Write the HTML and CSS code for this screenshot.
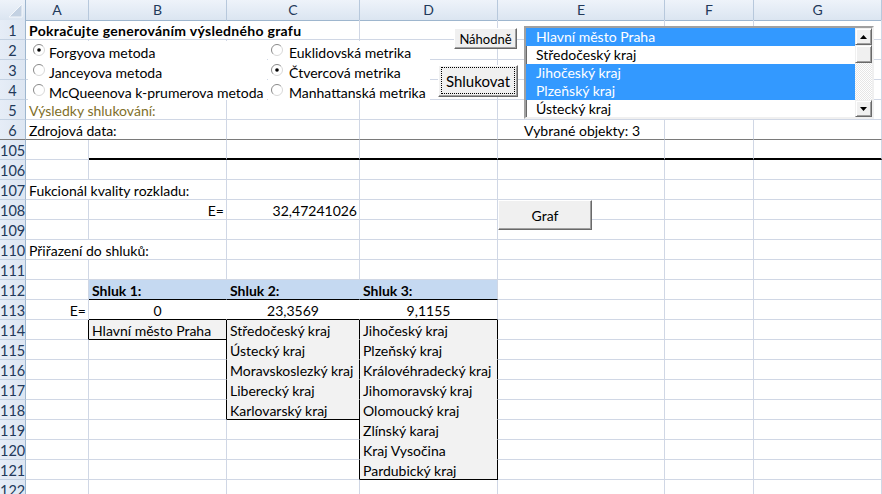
FILE: index.html
```html
<!DOCTYPE html>
<html lang="cs">
<head>
<meta charset="utf-8">
<title>Shlukování</title>
<link rel="stylesheet" href="styles.css">
</head>
<body>
<div class="sheet">
  <div class="row hd">
    <div class="c corner"><svg width="26" height="20" viewBox="0 0 26 20"><polygon points="22,4 22,17 9,17" fill="#c3d1e2" stroke="#f4f7fb" stroke-width="1"/></svg></div>
    <div class="c">A</div><div class="c">B</div><div class="c">C</div><div class="c">D</div><div class="c">E</div><div class="c">F</div><div class="c">G</div>
  </div>
  <div class="row"><div class="c rh">1</div><div class="c span3 b title">Pokračujte generováním výsledného grafu</div><div class="c"></div><div class="c"></div><div class="c"></div><div class="c"></div></div>
  <div class="row"><div class="c rh">2</div><div class="c"></div><div class="c"></div><div class="c"></div><div class="c"></div><div class="c"></div><div class="c"></div><div class="c"></div></div>
  <div class="row"><div class="c rh">3</div><div class="c"></div><div class="c"></div><div class="c"></div><div class="c"></div><div class="c"></div><div class="c"></div><div class="c"></div></div>
  <div class="row"><div class="c rh">4</div><div class="c"></div><div class="c"></div><div class="c"></div><div class="c"></div><div class="c"></div><div class="c"></div><div class="c"></div></div>
  <div class="row"><div class="c rh">5</div><div class="c span2 olive">Výsledky shlukování:</div><div class="c"></div><div class="c"></div><div class="c"></div><div class="c"></div><div class="c"></div></div>
  <div class="row frozen"><div class="c rh">6</div><div class="c span2">Zdrojová data:</div><div class="c"></div><div class="c"></div><div class="c lbl">Vybrané objekty: 3</div><div class="c"></div><div class="c"></div></div>
  <div class="row"><div class="c rh">105</div><div class="c"></div><div class="c thick"></div><div class="c thick"></div><div class="c thick"></div><div class="c thick"></div><div class="c thick"></div><div class="c thick"></div></div>
  <div class="row"><div class="c rh">106</div><div class="c"></div><div class="c"></div><div class="c"></div><div class="c"></div><div class="c"></div><div class="c"></div><div class="c"></div></div>
  <div class="row"><div class="c rh">107</div><div class="c span2">Fukcionál kvality rozkladu:</div><div class="c"></div><div class="c"></div><div class="c"></div><div class="c"></div><div class="c"></div></div>
  <div class="row"><div class="c rh">108</div><div class="c"></div><div class="c r">E=</div><div class="c r">32,47241026</div><div class="c"></div><div class="c"></div><div class="c"></div><div class="c"></div></div>
  <div class="row"><div class="c rh">109</div><div class="c"></div><div class="c"></div><div class="c"></div><div class="c"></div><div class="c"></div><div class="c"></div><div class="c"></div></div>
  <div class="row"><div class="c rh">110</div><div class="c span2">Přiřazení do shluků:</div><div class="c"></div><div class="c"></div><div class="c"></div><div class="c"></div><div class="c"></div></div>
  <div class="row"><div class="c rh">111</div><div class="c"></div><div class="c"></div><div class="c"></div><div class="c"></div><div class="c"></div><div class="c"></div><div class="c"></div></div>
  <div class="row"><div class="c rh">112</div><div class="c"></div><div class="c blu nr bb b">Shluk 1:</div><div class="c blu nr bb b">Shluk 2:</div><div class="c blu bb b">Shluk 3:</div><div class="c"></div><div class="c"></div><div class="c"></div></div>
  <div class="row"><div class="c rh">113</div><div class="c r">E=</div><div class="c ctr nr bb">0</div><div class="c ctr nr bb">23,3569</div><div class="c ctr bb">9,1155</div><div class="c"></div><div class="c"></div><div class="c"></div></div>
  <div class="row"><div class="c rh">114</div><div class="c br"></div><div class="c g br bb">Hlavní město Praha</div><div class="c g br">Středočeský kraj</div><div class="c g br">Jihočeský kraj</div><div class="c"></div><div class="c"></div><div class="c"></div></div>
  <div class="row"><div class="c rh">115</div><div class="c"></div><div class="c br"></div><div class="c g br">Ústecký kraj</div><div class="c g br">Plzeňský kraj</div><div class="c"></div><div class="c"></div><div class="c"></div></div>
  <div class="row"><div class="c rh">116</div><div class="c"></div><div class="c br"></div><div class="c g br">Moravskoslezký kraj</div><div class="c g br">Královéhradecký kraj</div><div class="c"></div><div class="c"></div><div class="c"></div></div>
  <div class="row"><div class="c rh">117</div><div class="c"></div><div class="c br"></div><div class="c g br">Liberecký kraj</div><div class="c g br">Jihomoravský kraj</div><div class="c"></div><div class="c"></div><div class="c"></div></div>
  <div class="row"><div class="c rh">118</div><div class="c"></div><div class="c br"></div><div class="c g br bb">Karlovarský kraj</div><div class="c g br">Olomoucký kraj</div><div class="c"></div><div class="c"></div><div class="c"></div></div>
  <div class="row"><div class="c rh">119</div><div class="c"></div><div class="c"></div><div class="c br"></div><div class="c g br">Zlínský karaj</div><div class="c"></div><div class="c"></div><div class="c"></div></div>
  <div class="row"><div class="c rh">120</div><div class="c"></div><div class="c"></div><div class="c br"></div><div class="c g br">Kraj Vysočina</div><div class="c"></div><div class="c"></div><div class="c"></div></div>
  <div class="row"><div class="c rh">121</div><div class="c"></div><div class="c"></div><div class="c br"></div><div class="c g br bb">Pardubický kraj</div><div class="c"></div><div class="c"></div><div class="c"></div></div>
  <div class="row"><div class="c rh">122</div><div class="c"></div><div class="c"></div><div class="c"></div><div class="c"></div><div class="c"></div><div class="c"></div><div class="c"></div></div>

  <div class="optbox opt1">
    <div class="opt"><svg class="radio" width="12" height="12" viewBox="0 0 12 12"><circle cx="6" cy="6" r="5.5" fill="#fff"/><path d="M2.1 9.9 A5.5 5.5 0 0 1 9.9 2.1" fill="none" stroke="#8a8a8a"/><path d="M9.9 2.1 A5.5 5.5 0 0 1 2.1 9.9" fill="none" stroke="#d8d8d8"/><circle cx="6" cy="6" r="1.8" fill="#000"/></svg><span>Forgyova metoda</span></div>
    <div class="opt"><svg class="radio" width="12" height="12" viewBox="0 0 12 12"><circle cx="6" cy="6" r="5.5" fill="#fff"/><path d="M2.1 9.9 A5.5 5.5 0 0 1 9.9 2.1" fill="none" stroke="#8a8a8a"/><path d="M9.9 2.1 A5.5 5.5 0 0 1 2.1 9.9" fill="none" stroke="#d8d8d8"/></svg><span>Janceyova metoda</span></div>
    <div class="opt"><svg class="radio" width="12" height="12" viewBox="0 0 12 12"><circle cx="6" cy="6" r="5.5" fill="#fff"/><path d="M2.1 9.9 A5.5 5.5 0 0 1 9.9 2.1" fill="none" stroke="#8a8a8a"/><path d="M9.9 2.1 A5.5 5.5 0 0 1 2.1 9.9" fill="none" stroke="#d8d8d8"/></svg><span>McQueenova k-prumerova metoda</span></div>
  </div>
  <div class="optbox opt2">
    <div class="opt"><svg class="radio" width="12" height="12" viewBox="0 0 12 12"><circle cx="6" cy="6" r="5.5" fill="#fff"/><path d="M2.1 9.9 A5.5 5.5 0 0 1 9.9 2.1" fill="none" stroke="#8a8a8a"/><path d="M9.9 2.1 A5.5 5.5 0 0 1 2.1 9.9" fill="none" stroke="#d8d8d8"/></svg><span>Euklidovská metrika</span></div>
    <div class="opt"><svg class="radio" width="12" height="12" viewBox="0 0 12 12"><circle cx="6" cy="6" r="5.5" fill="#fff"/><path d="M2.1 9.9 A5.5 5.5 0 0 1 9.9 2.1" fill="none" stroke="#8a8a8a"/><path d="M9.9 2.1 A5.5 5.5 0 0 1 2.1 9.9" fill="none" stroke="#d8d8d8"/><circle cx="6" cy="6" r="1.8" fill="#000"/></svg><span>Čtvercová metrika</span></div>
    <div class="opt"><svg class="radio" width="12" height="12" viewBox="0 0 12 12"><circle cx="6" cy="6" r="5.5" fill="#fff"/><path d="M2.1 9.9 A5.5 5.5 0 0 1 9.9 2.1" fill="none" stroke="#8a8a8a"/><path d="M9.9 2.1 A5.5 5.5 0 0 1 2.1 9.9" fill="none" stroke="#d8d8d8"/></svg><span>Manhattanská metrika</span></div>
  </div>

  <div class="btn b-nah">Náhodně</div>
  <div class="btn b-shl"><span class="focus"></span>Shlukovat</div>
  <div class="btn b-graf">Graf</div>

  <div class="list">
    <div class="items">
      <div class="it sel">Hlavní město Praha</div>
      <div class="it">Středočeský kraj</div>
      <div class="it sel">Jihočeský kraj</div>
      <div class="it sel">Plzeňský kraj</div>
      <div class="it">Ústecký kraj</div>
    </div>
    <div class="sb">
      <div class="sbb"><svg width="7" height="4" viewBox="0 0 7 4"><polygon points="3.5,0 7,4 0,4" fill="#000"/></svg></div>
      <div class="sbb thumb"></div>
      <div class="track"></div>
      <div class="sbb"><svg width="7" height="4" viewBox="0 0 7 4"><polygon points="0,0 7,0 3.5,4" fill="#000"/></svg></div>
    </div>
  </div>
</div>
</body>
</html>
```

FILE: styles.css
```css
* { box-sizing: border-box; }
body { margin: 0; background: #fff; font-family: Lato, "Liberation Sans", sans-serif; font-size: 14px; color: #000; }
.sheet { position: relative; width: 882px; height: 494px; overflow: hidden; }
.row { display: grid; grid-template-columns: 26px 63px 138px 133px 138px 167px 89px 128px; height: 20px; }
.c { border-right: 1px solid #d0d7e5; border-bottom: 1px solid #d0d7e5; padding: 2px 3px 0; line-height: 17px; white-space: nowrap; overflow: visible; min-width: 0; }
.hd .c { background: linear-gradient(#eef3fa, #dbe5f1); border-right-color: #b7c8dc; border-bottom-color: #9eb6ce; text-align: center; color: #22395a; padding: 1px 0 0; }
.hd .corner { padding: 0; border-right-color: #9eb6ce; }
.corner svg { display: block; }
.rh { background: linear-gradient(90deg, #e6edf7, #dde6f2); border-right-color: #9eb6ce; border-bottom-color: #c3d1e2; text-align: center; color: #22395a; padding: 2px 0 0; font-size: 14.5px; }
.frozen .c { border-bottom-color: #7a7a7a; }
.span2 { grid-column: span 2; }
.span3 { grid-column: span 3; }
.b { font-weight: bold; }
.title { letter-spacing: 0.3px; }
.r { text-align: right; padding-right: 2px; }
.ctr { text-align: center; }
.olive { color: #7f6f2a; }
.lbl { padding-left: 26px; }
.thick { border-bottom: 2px solid #000; }
.blu { background: #c5d9f1; }
.g { background: #f2f2f2; border-bottom-color: transparent; }
.nr { border-right-color: transparent; }
.bb { border-bottom-color: #000; }
.br { border-right-color: #000; }

.optbox { position: absolute; top: 41px; height: 59px; background: #fff; display: flex; flex-direction: column; }
.opt1 { left: 28px; width: 239px; padding-left: 5px; }
.opt2 { left: 268px; width: 162px; padding-left: 3px; }
.opt { height: 20px; display: flex; align-items: flex-start; white-space: nowrap; }
.radio { margin-top: 3px; flex: none; }
.opt span { line-height: 20px; padding-top: 2px; }
.opt1 .opt span { margin-left: 4px; }
.opt2 .opt span { margin-left: 6px; }

.btn { position: absolute; background: #f0f0f0; border: 1px solid; border-color: #fff #696969 #696969 #fff; box-shadow: inset -1px -1px #a0a0a0; display: flex; align-items: center; justify-content: center; white-space: nowrap; }
.b-nah { left: 454px; top: 28px; width: 63px; height: 21px; font-size: 13px; }
.b-shl { left: 438px; top: 65px; width: 80px; height: 32px; font-size: 15px; }
.focus { position: absolute; left: 2px; top: 1px; right: 2px; bottom: 2px; border: 1px dotted #000; }
.b-graf { left: 498px; top: 200px; width: 94px; height: 30px; }

.list { position: absolute; left: 524px; top: 26px; width: 350px; height: 93px; border: 2px solid; border-color: #a0a0a0 #f0f0f0 #f0f0f0 #a0a0a0; box-shadow: inset 1px 1px #696969; background: #fff; display: flex; overflow: hidden; }
.items { flex: 1; }
.it { height: 18px; line-height: 18px; padding-left: 10px; white-space: nowrap; }
.sel { background: #3399ff; color: #fff; }
.sb { width: 17px; display: flex; flex-direction: column; }
.sbb { height: 17px; flex: none; background: #f0f0f0; border: 1px solid; border-color: #f0f0f0 #696969 #696969 #f0f0f0; box-shadow: inset 1px 1px #fff, inset -1px -1px #a0a0a0; display: flex; align-items: center; justify-content: center; }
.thumb { height: 18px; }
.track { flex: 1; background: repeating-conic-gradient(#ffffff 0 25%, #e6e6e6 0 50%) 0 0 / 2px 2px; }
```
